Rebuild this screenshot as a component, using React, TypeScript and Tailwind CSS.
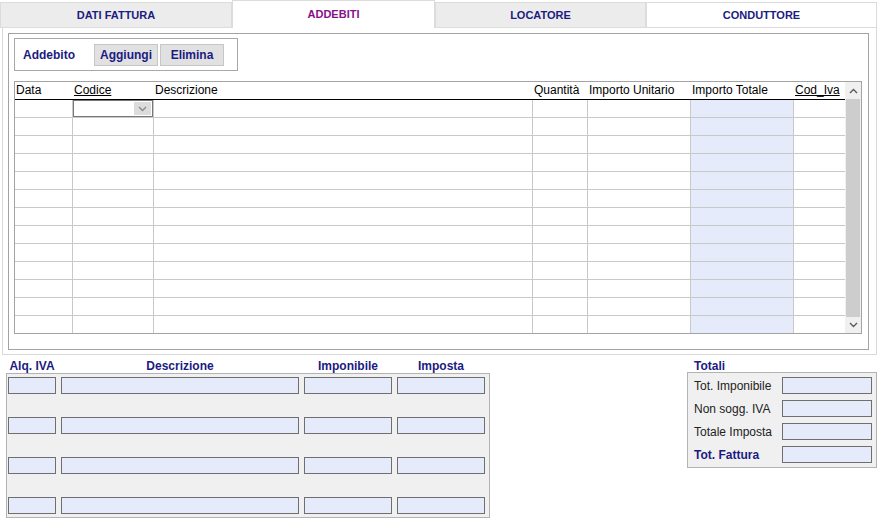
import React from "react";

const NAVY = "text-[#1b1b82]";

const dataRows = Array.from({ length: 13 }, (_, i) => i);

function Chevron({ up, color = "#5a5a5a" }: { up?: boolean; color?: string }) {
  return (
    <svg width="9" height="6" viewBox="0 0 9 6">
      <polyline
        points={up ? "1,5 4.5,1.5 8,5" : "1,1 4.5,4.5 8,1"}
        fill="none"
        stroke={color}
        strokeWidth="1.4"
      />
    </svg>
  );
}

function Field({ className }: { className: string }) {
  return <div className={`h-[17px] border border-[#6f6f6f] bg-[#e5ebfb] ${className}`} />;
}

export default function App() {
  return (
    <div className="w-[879px] h-[523px] overflow-hidden bg-white text-[12px] text-black font-['Liberation_Sans',Arial,sans-serif]">
      {/* tabs */}
      <div className="flex h-[28px] items-end">
        <div className={`flex h-[26px] w-[232px] items-center justify-center border border-[#dcdcdc] bg-[#ececec] text-[11px] font-bold ${NAVY}`}>
          DATI FATTURA
        </div>
        <div className="flex h-[28px] w-[203px] items-start justify-center border-x border-t border-[#dcdcdc] bg-white pt-[6px] text-[11px] font-bold leading-[14px] text-[#86108a]">
          ADDEBITI
        </div>
        <div className={`flex h-[26px] w-[211px] items-center justify-center border border-[#dcdcdc] bg-[#ececec] text-[11px] font-bold ${NAVY}`}>
          LOCATORE
        </div>
        <div className={`flex h-[26px] w-[231px] items-center justify-center border border-[#dcdcdc] bg-white text-[11px] font-bold ${NAVY}`}>
          CONDUTTORE
        </div>
      </div>

      {/* tab content */}
      <div className="ml-[2px] h-[327px] w-[875px] border-x border-b border-[#d9d9d9] pl-[5px] pt-[5px]">
        <div className="h-[317px] w-[861px] border border-[#a3a3a3] pl-[5px] pt-[4px]">
          <div className="flex h-[33px] w-[224px] items-center border border-[#a8a8a8] pl-[8px]">
            <span className={`w-[71px] font-bold ${NAVY}`}>Addebito</span>
            <button className={`h-[22px] w-[64px] border border-[#c6c6c6] bg-[#e1e1e1] font-bold ${NAVY}`}>Aggiungi</button>
            <button className={`ml-[2px] h-[22px] w-[64px] border border-[#c6c6c6] bg-[#e1e1e1] font-bold ${NAVY}`}>Elimina</button>
          </div>

          {/* grid */}
          <div className="mt-[10px] flex h-[253px] w-[848px] border border-[#a3a3a3]">
            <div className="w-[830px]">
              <div className="grid h-[18px] grid-cols-[58px_81px_379px_55px_103px_103px_51px] border-b border-black leading-[17px]">
                <div className="pl-[1px]">Data</div>
                <div className="pl-[1px] underline">Codice</div>
                <div className="pl-[1px]">Descrizione</div>
                <div className="pl-[1px]">Quantità</div>
                <div className="pl-[1px]">Importo Unitario</div>
                <div className="pl-[1px]">Importo Totale</div>
                <div className="pl-[1px] underline">Cod_Iva</div>
              </div>
              {dataRows.map((r) => (
                <div
                  key={r}
                  className={`grid grid-cols-[58px_81px_379px_55px_103px_103px_51px] ${r === 12 ? "h-[17px]" : "h-[18px] border-b border-[#c9c9c9]"}`}
                >
                  <div className="border-r border-[#c9c9c9]" />
                  <div className="border-r border-[#c9c9c9]">
                    {r === 0 && (
                      <div className="flex h-[17px] w-[80px] items-center justify-end border border-[#777777] bg-white pr-[1px]">
                        <div className="flex h-[13px] w-[17px] items-center justify-center bg-[#dcdcdc]">
                          <Chevron color="#8a8a8a" />
                        </div>
                      </div>
                    )}
                  </div>
                  <div className="border-r border-[#c9c9c9]" />
                  <div className="border-r border-[#c9c9c9]" />
                  <div className="border-r border-[#c9c9c9]" />
                  <div className="border-r border-[#c9c9c9] bg-[#e5ebfb]" />
                  <div />
                </div>
              ))}
            </div>
            {/* scrollbar */}
            <div className="flex w-[16px] flex-col bg-[#f0f0f0]">
              <div className="flex h-[17px] items-center justify-center">
                <Chevron up />
              </div>
              <div className="mx-[1px] flex-1 bg-[#cdcdcd]" />
              <div className="flex h-[16px] items-center justify-center">
                <Chevron />
              </div>
            </div>
          </div>
        </div>
      </div>

      {/* totals area */}
      <div className="mt-[4px] flex">
        <div className="ml-[6px] w-[484px]">
          <div className={`grid h-[14px] grid-cols-[48px_238px_88px_88px] gap-x-[5px] pl-[2px] text-center font-bold leading-[15px] ${NAVY}`}>
            <div>Alq. IVA</div>
            <div>Descrizione</div>
            <div>Imponibile</div>
            <div>Imposta</div>
          </div>
          <div className="flex h-[145px] flex-col gap-[23px] border border-[#b3b3b3] bg-[#f0f0f0] pl-[1px] pt-[3px]">
            {[0, 1, 2, 3].map((i) => (
              <div key={i} className="flex gap-[5px]">
                <Field className="w-[48px]" />
                <Field className="w-[238px]" />
                <Field className="w-[88px]" />
                <Field className="w-[88px]" />
              </div>
            ))}
          </div>
        </div>

        <div className="ml-[197px] w-[190px]">
          <div className={`h-[13px] pl-[7px] font-bold leading-[15px] ${NAVY}`}>Totali</div>
          <div className="flex h-[96px] flex-col gap-[6px] border border-[#b3b3b3] bg-[#f0f0f0] pl-[6px] pr-[4px] pt-[4px] text-[#222222]">
            {[
              { label: "Tot. Imponibile" },
              { label: "Non sogg. IVA" },
              { label: "Totale Imposta" },
              { label: "Tot. Fattura", strong: true },
            ].map((row) => (
              <div key={row.label} className="flex h-[17px] items-center">
                <span className={`flex-1 ${row.strong ? `font-bold ${NAVY}` : ""}`}>{row.label}</span>
                <Field className="w-[90px]" />
              </div>
            ))}
          </div>
        </div>
      </div>
    </div>
  );
}
